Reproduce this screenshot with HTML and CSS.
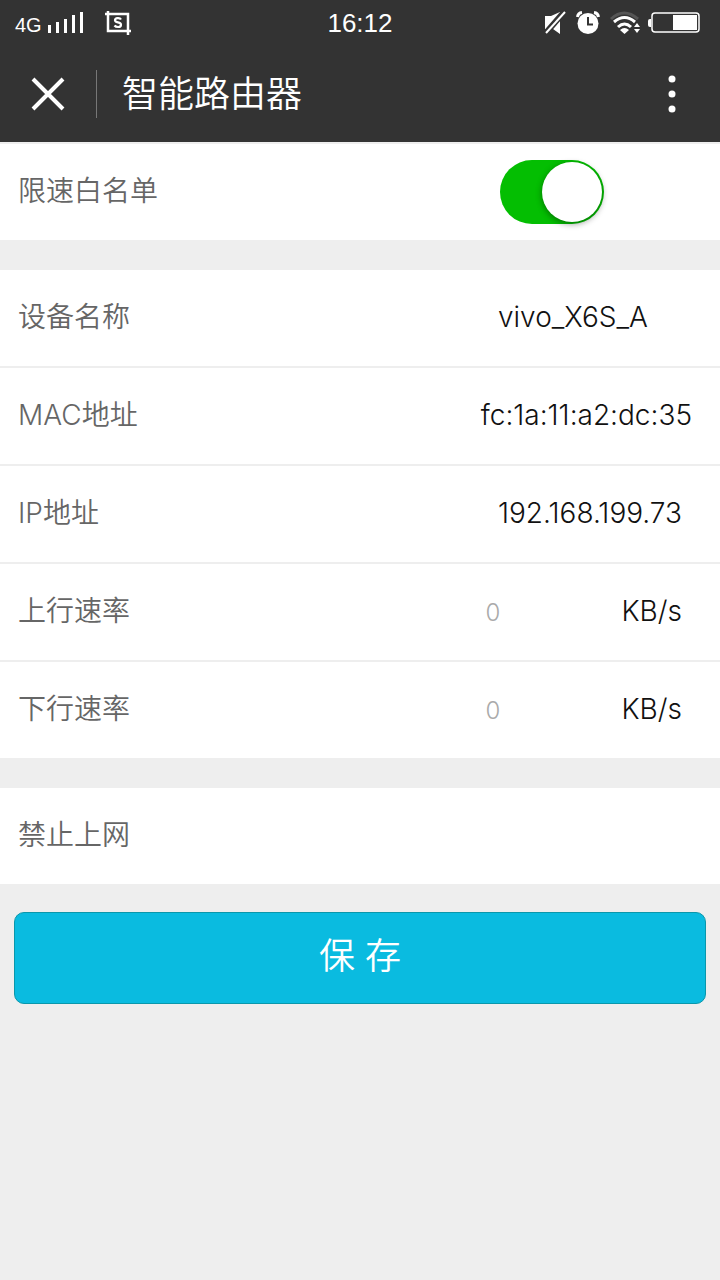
FILE: index.html
```html
<!DOCTYPE html>
<html lang="zh-CN">
<head>
<meta charset="utf-8">
<meta name="viewport" content="width=device-width, initial-scale=1">
<title>智能路由器</title>
<link rel="stylesheet" href="styles.css">
</head>
<body>
<div class="status-bar">
  <div class="status-left">
    <span class="network">4G</span>
    <svg class="signal" width="36" height="24" viewBox="0 0 36 24" fill="#fff" aria-hidden="true">
      <path d="M0 14h3v8H0zM8 11h3v11H8zM16 8h3v14h-3zM24 4h3v18h-3zM32 1h3v21h-3z"/>
    </svg>
    <svg class="screenshot" width="28" height="24" viewBox="0 0 28 24" fill="none" stroke="#fff" aria-hidden="true">
      <path d="M0 3H23V24M3 0V20H26" stroke-width="2.5"/>
      <path d="M16 8.500C15 6.500 10 6.500 10 9.200C10 12 16 10.700 16 13.700C16 16.800 11 16.500 9.500 14.500" stroke-width="2.2"/>
    </svg>
  </div>
  <time class="clock">16:12</time>
  <div class="status-right">
    <svg width="22" height="24" viewBox="0 0 22 24" aria-hidden="true">
      <path d="M1 5H7L16 1V23L9 18H1z" fill="#fff"/>
      <path d="M1 23L20 1" stroke="#333" stroke-width="6"/>
      <path d="M2 22L21 1" stroke="#fff" stroke-width="2"/>
    </svg>
    <svg width="24" height="24" viewBox="0 0 24 24" fill="none" stroke="#fff" aria-hidden="true">
      <circle cx="12" cy="12.500" r="10.500" fill="#fff" stroke="none"/>
      <path d="M1.500 6Q2 2 6 1.500M18 1.500Q22 2 22.500 6" stroke-width="3"/>
      <path d="M12 6V13.500H17" stroke="#333" stroke-width="2"/>
    </svg>
    <svg width="32" height="24" viewBox="0 0 32 24" fill="none" stroke="#fff" aria-hidden="true">
      <path d="M1 8Q14-4 28 8" stroke="#555" stroke-width="3"/>
      <path d="M4 11Q14.500 2 25 11" stroke-width="3"/>
      <path d="M8 16Q14.500 10 21 16" stroke-width="3"/>
      <path d="M10 19Q14.500 15 19 19L14.500 23z" fill="#fff" stroke="none"/>
      <path d="M24 16L27 12L30 16zM24 18H30L27 22z" fill="#fff" stroke="none"/>
    </svg>
    <svg width="52" height="24" viewBox="0 0 52 24" aria-hidden="true">
      <rect x="4" y="2" width="47" height="19" rx="3" fill="none" stroke="#fff" stroke-width="1.500"/>
      <path d="M25 4H49V19H25zM3 8V16H2Q0 16 0 14V10Q0 8 2 8z" fill="#fff"/>
    </svg>
  </div>
</div>
<header class="title-bar">
  <button class="icon-button close" type="button" aria-label="关闭">
    <svg width="34" height="34" viewBox="0 0 34 34" aria-hidden="true"><path d="M2 2L32 32M32 2L2 32" stroke="#fff" stroke-width="4"/></svg>
  </button>
  <h1 class="title">智能路由器</h1>
  <button class="icon-button more" type="button" aria-label="更多">
    <svg width="8" height="40" viewBox="0 0 8 40" fill="#fff" aria-hidden="true"><circle cx="4" cy="5" r="3.500"/><circle cx="4" cy="20" r="3.500"/><circle cx="4" cy="35" r="3.500"/></svg>
  </button>
</header>
<main>
  <section class="group">
    <div class="row">
      <label class="label" for="whitelist">限速白名单</label>
      <div class="value"><input class="switch" id="whitelist" type="checkbox" role="switch" checked></div>
    </div>
  </section>
  <section class="group">
    <div class="row"><span class="label">设备名称</span><span class="value">vivo_X6S_A</span></div>
    <div class="row"><span class="label">MAC地址</span><span class="value">fc:1a:11:a2:dc:35</span></div>
    <div class="row"><span class="label">IP地址</span><span class="value">192.168.199.73</span></div>
    <div class="row">
      <label class="label" for="up">上行速率</label>
      <div class="rate"><input class="rate-input" id="up" type="text" inputmode="numeric" placeholder="0"><span>KB/s</span></div>
    </div>
    <div class="row">
      <label class="label" for="down">下行速率</label>
      <div class="rate"><input class="rate-input" id="down" type="text" inputmode="numeric" placeholder="0"><span>KB/s</span></div>
    </div>
  </section>
  <section class="group">
    <div class="row"><span class="label">禁止上网</span></div>
  </section>
  <div class="actions"><button class="save" type="button">保 存</button></div>
</main>
</body>
</html>
```
FILE: styles.css
```css
* {
  box-sizing: border-box;
}

body {
  margin: 0;
  min-height: 100vh;
  background: #eee;
  color: #111;
  font-family: Inter, "Noto Sans CJK SC", sans-serif;
  font-size: 28px;
  font-weight: 300;
  line-height: 40px;
}

.status-bar {
  display: grid;
  grid-template-columns: 1fr auto 1fr;
  align-items: center;
  height: 46px;
  padding: 0 20px 0 15px;
  background: #333;
  color: #fff;
  font-family: "Liberation Sans", sans-serif;
}

.status-left,
.status-right {
  display: flex;
  align-items: center;
}

.network {
  font-size: 20px;
  padding-top: 4px;
}

.signal {
  margin-left: 6px;
}

.screenshot {
  margin-left: 21px;
}

.clock {
  padding-left: 5px;
  font-size: 26px;
}

.status-right {
  justify-content: flex-end;
  gap: 10px;
}

.status-right svg:last-child {
  margin-left: -4px;
}

.title-bar {
  display: flex;
  align-items: center;
  height: 96px;
  background: #333;
  color: #fff;
}

.icon-button {
  display: flex;
  align-items: center;
  justify-content: center;
  height: 48px;
  padding: 0;
  border: 0;
  background: none;
}

.close {
  width: 97px;
  border-right: 1px solid #777;
}

.more {
  width: 96px;
}

.title {
  flex: 1;
  margin: 0;
  padding-left: 25px;
  font-size: 36px;
  font-weight: 350;
  line-height: 52px;
}

.group {
  margin-bottom: 30px;
  background: #fff;
}

.group:first-child {
  border-top: 2px solid #eee;
}

.row {
  display: flex;
  align-items: center;
  justify-content: space-between;
  min-height: 96px;
  padding: 0 28px 2px 18px;
}

.row + .row {
  min-height: 98px;
  border-top: 2px solid #eee;
}

.label {
  color: #666;
  font-weight: 350;
}

.value {
  min-width: 194px;
}

.rate {
  display: flex;
  align-items: center;
  gap: 24px;
  padding-right: 10px;
}

.rate-input {
  width: 120px;
  padding: 4px 8px 0;
  border: 0;
  background: transparent;
  color: #111;
  font: inherit;
  font-size: 24px;
}

.rate-input::placeholder {
  color: #aaa;
  opacity: 1;
}

.switch {
  display: block;
  width: 104px;
  height: 64px;
  margin: 2px 2px 0;
  padding: 2px;
  border-radius: 32px;
  appearance: none;
  background: #dfdfdf;
}

.switch::before {
  content: "";
  display: block;
  width: 60px;
  height: 60px;
  border-radius: 50%;
  background: #fff;
  box-shadow: 0 2px 6px rgba(0, 0, 0, 0.4);
}

.switch:checked {
  background: #04be02;
}

.switch:checked::before {
  margin-left: 40px;
}

.actions {
  padding: 0 14px;
  margin-top: -2px;
}

.save {
  display: block;
  width: 100%;
  height: 92px;
  padding: 0 0 4px;
  border: 1px solid #0a97ab;
  border-radius: 10px;
  background: #0abbe0;
  color: #fff;
  font: inherit;
  font-size: 36px;
  font-weight: 350;
}
```
